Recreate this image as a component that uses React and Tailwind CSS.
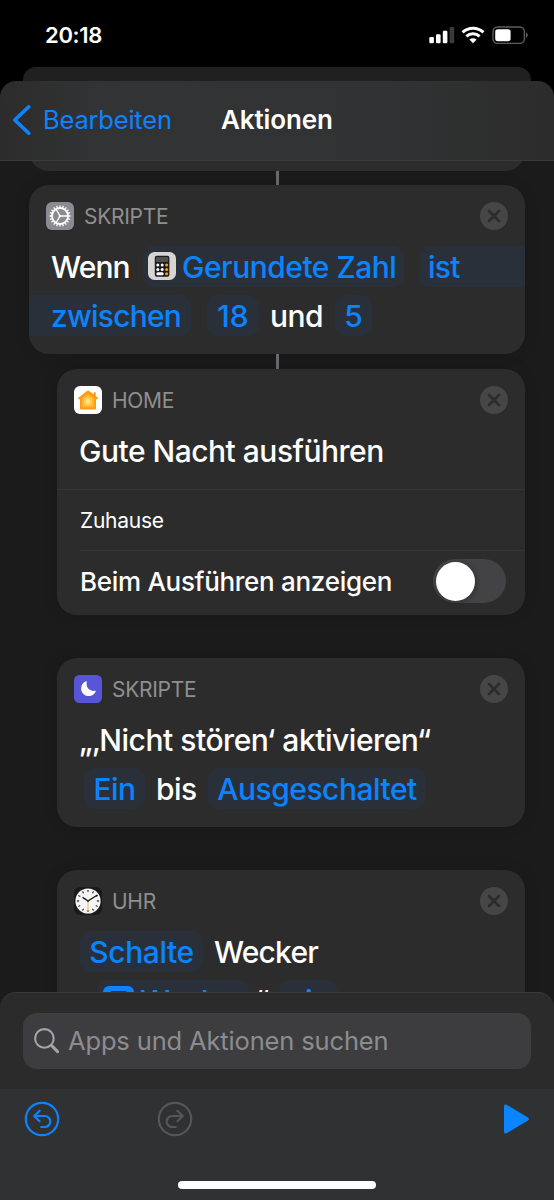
const rays = Array.from({ length: 20 }, (_, i) => i * 18);
const keypad = [8, 12.4, 16.8];
const clockHours = [12, 1, 2, 3, 4, 5, 6, 7, 8, 9, 10, 11];

export default function App() {
  return (
    <div className="flex h-[1200px] w-[554px] flex-col overflow-hidden bg-black text-white antialiased [font-family:Inter,sans-serif]">
      <StatusBar />

      <div className="mx-[23px] h-[14px] shrink-0 rounded-t-[13px] bg-[#202020]" />

      <div className="flex min-h-0 flex-1 flex-col bg-[linear-gradient(#000_0_40px,#1b1b1c_40px)]">
        <NavBar />
        <main className="flex h-[847px] shrink-0 flex-col overflow-hidden bg-[#1b1b1c] px-[29px]">
          <div className="-mt-[41px] h-[51px] shrink-0 rounded-[20px] bg-[#2c2c2c]" />
          <Connector className="h-[14px]" />
          <ConditionCard />
          <Connector className="h-[15px]" />
          <HomeCard />
          <DndCard />
          <ClockCard />
        </main>
        <SearchPanel />
        <Toolbar />
      </div>
    </div>
  );
}

function StatusBar() {
  return (
    <header className="flex h-[67px] shrink-0 items-start justify-between pr-[25px] pl-[45px]">
      <span className="mt-[21px] text-[22px] leading-[28px] font-semibold tracking-[-0.3px]">20:18</span>
      <div className="mt-[25px] flex items-center">
        <svg width="27" height="20" viewBox="0 0 27 20" fill="#fff">
          <rect x="0.3" y="12" width="4.6" height="6.2" rx="1.2" />
          <rect x="7" y="9.3" width="4.6" height="8.9" rx="1.2" />
          <rect x="13.8" y="5.8" width="4.6" height="12.4" rx="1.2" />
          <rect x="20.6" y="2" width="4.6" height="16.2" rx="1.2" fill="#3a3a3a" />
        </svg>
        <svg className="ml-[5px]" width="24" height="20" viewBox="0 0 24 20" fill="none" stroke="#fff" strokeWidth="3">
          <path d="M1.6 7.4a15 15 0 0 1 20.8 0" />
          <path d="M5.4 11.3a9.6 9.6 0 0 1 13.2 0" />
          <path d="M8.4 14.6a5.2 5.2 0 0 1 7.2 0L12 18.2z" fill="#fff" stroke="none" />
        </svg>
        <svg className="ml-[7px]" width="37" height="20" viewBox="0 0 37 20">
          <rect x="1" y="2" width="31.4" height="16.4" rx="4.6" fill="none" stroke="#5c5c5c" strokeWidth="1.4" />
          <rect x="3.2" y="4.2" width="15.4" height="12" rx="2.6" fill="#fff" />
          <path d="M34 7.6c2.4 1 2.4 4.200 0 5.200z" fill="#5c5c5c" />
        </svg>
      </div>
    </header>
  );
}

function NavBar() {
  return (
    <nav className="z-10 flex h-[80px] shrink-0 items-center rounded-t-[16px] border-b border-[#3b3b3b] bg-[linear-gradient(90deg,#2c2c2c,#323334_18%,#313233_70%,#2c2c2c)] pl-[12px]">
      <svg className="-mt-[2px]" width="20" height="32" viewBox="0 0 20 32" fill="none" stroke="#0a84ff" strokeWidth="3.6" strokeLinecap="round" strokeLinejoin="round">
        <path d="M16.800 2.800 2.800 16l14 13.200" />
      </svg>
      <span className="ml-[11px] w-[178px] text-[25.5px] tracking-[-0.2px] whitespace-nowrap text-[#0a84ff]">Bearbeiten</span>
      <h1 className="-mt-[2px] text-[26px] font-semibold tracking-[-0.1px] whitespace-nowrap">Aktionen</h1>
    </nav>
  );
}

function Connector({ className }) {
  return <div className={`w-[3px] shrink-0 self-center bg-[#696a6e] ${className}`} />;
}

function Card({ className, children }) {
  return (
    <section className={`shrink-0 overflow-hidden rounded-[20px] bg-[#2c2c2c] shadow-[0_0_16px_rgba(0,0,0,0.12)] ${className}`}>
      {children}
    </section>
  );
}

function CardHeader({ icon, label }) {
  return (
    <div className="flex h-[28px] items-center px-[17px]">
      {icon}
      <span className="mt-[2px] ml-[10px] text-[21px] tracking-[-0.3px] text-[#8f8f8f]">{label}</span>
      <button className="ml-auto" aria-label="Entfernen">
        <svg width="28" height="28" viewBox="0 0 28 28">
          <circle cx="14" cy="14" r="14" fill="#464646" />
          <path d="m9 9 10 10M19 9 9 19" stroke="#2c2c2c" strokeWidth="2.700" strokeLinecap="round" />
        </svg>
      </button>
    </div>
  );
}

function Chip({ className, children }) {
  return (
    <span className={`flex h-[41px] shrink-0 items-center rounded-[11px] bg-[#2a3039] pt-[2px] whitespace-nowrap text-[#0a84ff] ${className}`}>
      {children}
    </span>
  );
}

function ConditionCard() {
  return (
    <Card className="h-[169px] pt-[17px]">
      <CardHeader icon={<GearIcon />} label="SKRIPTE" />
      <div className="mt-[16px] flex h-[41px] items-center text-[30px] leading-[39px] font-medium tracking-[-0.7px]">
        <span className="w-[114px] pt-[2px] pl-[22px] tracking-[-0.9px]">Wenn</span>
        <Chip className="w-[261px] gap-[6px] pl-[5px] tracking-[-0.5px]">
          <CalculatorIcon />
          Gerundete Zahl
        </Chip>
        <Chip className="ml-[15px] w-[106px] rounded-r-none pl-[9px]">ist</Chip>
      </div>
      <div className="mt-[8px] flex h-[41px] items-center text-[30px] leading-[39px] font-medium">
        <Chip className="w-[162px] rounded-l-none pl-[22px] tracking-[-0.8px]">zwischen</Chip>
        <Chip className="ml-[16px] w-[52px] justify-center">18</Chip>
        <span className="w-[76px] pt-[2px] pl-[11px] tracking-[-0.6px]">und</span>
        <Chip className="w-[37px] justify-center">5</Chip>
      </div>
    </Card>
  );
}

function HomeCard() {
  return (
    <Card className="ml-[28px] h-[246px] pt-[17px]">
      <CardHeader icon={<HouseIcon />} label="HOME" />
      <h2 className="mt-[16px] h-[59px] pt-px pl-[22px] text-[30px] leading-[41px] font-medium tracking-[-0.5px] whitespace-nowrap">Gute Nacht ausführen</h2>
      <div className="flex h-[61px] items-center border-t border-[#353535] pt-[2px] pl-[23px] text-[21px] tracking-[-0.25px]">Zuhause</div>
      <div className="ml-[23px] flex h-[64px] items-center justify-between border-t border-[#353535] pr-[19px] pb-[3px]">
        <span className="mt-px text-[26px] font-medium tracking-[-0.3px] whitespace-nowrap">Beim Ausführen anzeigen</span>
        <span className="flex h-[44px] w-[73px] items-center rounded-full bg-[#434346] pl-[3px]">
          <span className="size-[39px] rounded-full bg-white shadow-[2px_1px_5px_rgba(0,0,0,0.25)]" />
        </span>
      </div>
    </Card>
  );
}

function DndCard() {
  return (
    <Card className="mt-[43px] ml-[28px] h-[169px] pt-[17px]">
      <CardHeader icon={<MoonIcon />} label="SKRIPTE" />
      <h2 className="mt-[16px] h-[41px] pt-px pl-[22px] text-[30px] leading-[41px] font-medium tracking-[-0.47px] whitespace-nowrap">„‚Nicht stören‘ aktivieren“</h2>
      <div className="mt-[8px] flex h-[41px] items-center pl-[27px] text-[30px] leading-[39px] font-medium tracking-[-0.5px]">
        <Chip className="w-[61px] justify-center">Ein</Chip>
        <span className="w-[63px] pt-[2px] pl-[11px]">bis</span>
        <Chip className="w-[218px] justify-center">Ausgeschaltet</Chip>
      </div>
    </Card>
  );
}

function ClockCard() {
  return (
    <Card className="mt-[43px] ml-[28px] h-[220px] pt-[17px]">
      <CardHeader icon={<ClockIcon />} label="UHR" />
      <div className="mt-[16px] flex h-[41px] items-center pl-[23px] text-[30px] leading-[39px] font-medium">
        <Chip className="w-[123px] justify-center tracking-[-0.4px]">Schalte</Chip>
        <span className="pt-[2px] pl-[11px] tracking-[-0.8px]">Wecker</span>
      </div>
      <div className="mt-[8px] flex h-[41px] items-center pl-[23px] text-[30px] leading-[39px] font-medium tracking-[-0.8px]">
        <span className="w-[17px] pt-[2px]">„</span>
        <Chip className="w-[152px] gap-[6px] pl-[6px]">
          <svg className="-mt-[3px]" width="31" height="29" viewBox="0 0 31 29">
            <rect width="31" height="29" rx="6" fill="#0a84ff" />
            <rect x="7" y="5" width="17" height="17" rx="2" fill="#2a3039" />
          </svg>
          Wecker
        </Chip>
        <span className="w-[30px] pt-[2px] pl-[6px]">“</span>
        <Chip className="w-[59px] justify-center">ein</Chip>
      </div>
    </Card>
  );
}

function SearchPanel() {
  return (
    <div className="z-10 -mt-[16px] h-[97px] shrink-0 rounded-t-[16px] border-t border-[#3a3a3a] bg-[#2b2b2b] px-[23px] pt-[20px]">
      <div className="flex h-[56px] items-center rounded-[14px] bg-[#3d3d3f] pl-[11px]">
        <svg width="26" height="26" viewBox="0 0 26 26" fill="none" stroke="#a3a2aa" strokeLinecap="round">
          <circle cx="10.400" cy="10.400" r="9.300" strokeWidth="2.100" />
          <path d="m17.400 17.400 6.200 6.200" strokeWidth="3" />
        </svg>
        <span className="mt-px ml-[8px] text-[25.5px] tracking-[-0.15px] whitespace-nowrap text-[#8c8c90]">Apps und Aktionen suchen</span>
      </div>
    </div>
  );
}

function Toolbar() {
  return (
    <footer className="flex flex-1 flex-col bg-[#303132]">
      <div className="flex h-[60px] items-center px-[24px]">
        <button aria-label="Widerrufen" className="text-[#0a84ff]">
          <UndoIcon />
        </button>
        <button aria-label="Wiederholen" className="ml-[97px] -scale-x-100 text-[#565656]">
          <UndoIcon />
        </button>
        <svg className="ml-auto" width="27" height="30" viewBox="0 0 27 30" fill="#0a84ff">
          <path d="M1 2.300C1 .7 2.600.1 3.900.9L25 13.400c1.300.800 1.300 2.400 0 3.200L3.900 29.100C2.600 29.900 1 29.300 1 27.700z" />
        </svg>
      </div>
      <div className="mt-[32px] h-[8px] w-[198px] self-center rounded-full bg-white" />
    </footer>
  );
}

function UndoIcon() {
  return (
    <svg width="36" height="36" viewBox="0 0 36 36" fill="none" stroke="currentColor" strokeWidth="2.200" strokeLinecap="round" strokeLinejoin="round">
      <circle cx="18" cy="18" r="16.200" />
      <path d="M15.700 9.800 10.200 15l5.300 5.200M10.400 15h10.400a5.500 5.500 0 0 1 0 11h-3.600" />
    </svg>
  );
}

function GearIcon() {
  return (
    <svg width="28" height="28" viewBox="0 0 28 28" fill="none" stroke="#fff">
      <rect width="28" height="28" rx="6" fill="#8b8a90" stroke="none" />
      <circle cx="14" cy="14" r="8" strokeWidth="1.800" />
      {rays.map((a) => (
        <path key={a} d="M14 5.800V3.400" strokeWidth="1.300" transform={`rotate(${a} 14 14)`} />
      ))}
      <path d="M14 14h8M14 14l-4-7M14 14l-4 7" strokeWidth="1.300" />
      <circle cx="14" cy="14" r="1.300" fill="#fff" stroke="none" />
    </svg>
  );
}

function CalculatorIcon() {
  return (
    <svg className="-mt-[3px]" width="28" height="28" viewBox="0 0 28 28">
      <rect width="28" height="28" rx="6.500" fill="#d6d5d2" />
      <rect x="6.800" y="3.800" width="14.600" height="21" rx="2" fill="#1c1c1e" />
      <rect x="8" y="5" width="12.200" height="5" rx="0.800" fill="#505052" />
      {keypad.map((y, row) => (
        <g key={y}>
          {row < 2 ? (
            <>
              <circle cx="9.800" cy={y + 5} r="1.500" fill="#fff" />
              <circle cx="14.200" cy={y + 5} r="1.500" fill="#fff" />
            </>
          ) : (
            <rect x="8.300" y={y + 3.5} width="7.400" height="3" rx="1.500" fill="#fff" />
          )}
          <circle cx="18.600" cy={y + 5} r="1.500" fill="#ff9f0a" />
        </g>
      ))}
    </svg>
  );
}

function HouseIcon() {
  return (
    <svg width="28" height="28" viewBox="0 0 28 28">
      <rect width="28" height="28" rx="6" fill="#fff" />
      <path d="M14 4.200 3.800 12.200l.9 1H6v9.200c0 .7.400 1.100 1.100 1.100h13.800c.7 0 1.100-.4 1.100-1.100v-9.200h1.400l.9-1L21.700 10V6.300h-1.900v2.300z" fill="#ff9a12" />
      <path d="m14 7.600-6 4.700v8.900h12v-8.900z" fill="#ffb632" />
      <path d="m14 10-4 3.200v6.100h8v-6.100z" fill="#ffcd50" />
      <path d="m14 12.600-2 1.600v3.200h4v-3.200z" fill="#ffe47f" />
    </svg>
  );
}

function MoonIcon() {
  return (
    <svg width="28" height="28" viewBox="0 0 28 28">
      <rect width="28" height="28" rx="5.500" fill="#5856d6" />
      <path d="M12.200 6.300c.4-.2.700.1.600.5-1.200 5.300 2.500 9.800 8.300 9 .5 0 .8.300.6.700a7.600 7.600 0 1 1-9.500-10.200z" fill="#fff" />
    </svg>
  );
}

function ClockIcon() {
  return (
    <svg width="28" height="28" viewBox="0 0 28 28">
      <rect width="28" height="28" rx="6" fill="#1a1a1b" />
      <circle cx="14" cy="14" r="12.600" fill="#f4f4f4" />
      {clockHours.map((h) => (
        <path key={h} d="M14 2.900v2.200" stroke="#444" strokeWidth="1.300" transform={`rotate(${h * 30} 14 14)`} />
      ))}
      <path d="m14 14-5-3.400M14 14l9-5.800" stroke="#111" strokeWidth="1.300" strokeLinecap="round" />
      <path d="M14 12v13" stroke="#f0a030" strokeWidth="0.800" />
      <circle cx="14" cy="14" r="1" fill="#222" />
    </svg>
  );
}
